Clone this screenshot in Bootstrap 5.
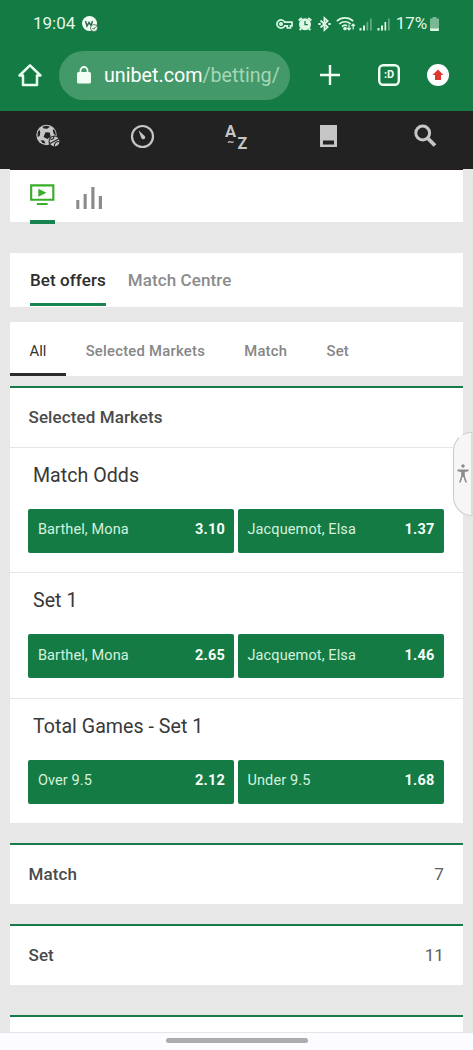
<!DOCTYPE html>
<html lang="en">
<head>
<meta charset="utf-8">
<meta name="viewport" content="width=device-width, initial-scale=1">
<title>Bet offers</title>
<link href="https://cdn.jsdelivr.net/npm/bootstrap@5.3.0/dist/css/bootstrap.min.css" rel="stylesheet">
<style>
  :root { --brand: #147b45; --page: #e7e7e7; }
  html, body { height: 1050px; overflow: hidden; }
  body { background: var(--page); font-family: Roboto, "Noto Sans", sans-serif; color: #333; line-height: 1; }
  svg { display: block; flex: none; overflow: visible; }
  .top-area { background: var(--brand); height: 111px; color: #fff; }
  .status { height: 47px; padding: 0 34px 0 33px; font-size: 17px; color: #e2f8e8; }
  .status svg { color: #dcf8e4; }
  .tool-row { height: 56px; padding: 0 24px 0 18px; }
  .omnibox { width: 231px; height: 49px; margin-left: 17px; padding-left: 18px; background: #44996a; font-size: 19.7px; overflow: hidden; }
  .omnibox .url { margin-left: 13px; padding-top: 2px; }
  .omnibox .path { color: #a5d6b6; }
  .site-nav { background: #222; height: 58px; color: #c6c6c6; }
  .site-nav .spot { display: flex; }
  .panel { margin: 0 10px; background: #fff; }
  .media-tabs { height: 53px; padding: 0 20px; gap: 21px; border-top: 1px solid #2b1d1d; }
  .media-tabs .on { height: 54px; border-bottom: 4px solid #17834f; }
  .page-tabs { height: 54px; margin-top: 31px; padding: 0 20px; gap: 22px; font-size: 17px; letter-spacing: .08px; font-weight: 500; color: #8b8b8b; }
  .page-tabs .tab { padding-top: 19px; height: 53px; border-bottom: 3px solid transparent; white-space: nowrap; }
  .page-tabs .on { color: #2d2d2d; border-color: #17834f; }
  .market-tabs { height: 54px; margin-top: 15px; font-size: 14.8px; font-weight: 500; color: #868686; }
  .market-tabs .tab { padding: 22px 19.6px 0; height: 54px; border-bottom: 3px solid transparent; white-space: nowrap; letter-spacing: .25px; }
  .market-tabs .on { color: #333; font-weight: 400; letter-spacing: 0; border-color: #2b2b2b; }
  .group-box { border-top: 2px solid #18794a; }
  .group-head { padding: 1px 19px 0 18.5px; height: 59px; font-size: 17px; font-weight: 500; color: #4a4a4a; letter-spacing: .1px; }
  .group-fold { padding-top: 0; }
  .group-head .count { font-size: 17.2px; font-weight: 400; color: #606060; letter-spacing: 0; padding-top: 1px; }
  .event { height: 125.5px; border-top: 1px solid #e6e6e6; padding: 0 19px 0 18.4px; }
  .event h2 { margin: 0; padding: 18px 0 0 4.6px; height: 61.4px; font-size: 19.6px; font-weight: 400; line-height: 20px; letter-spacing: .03px; color: #383838; }
  .odds { gap: 3.5px; }
  .btn-odd { height: 44px; flex: 1 1 0; border: 0; border-radius: 2px; padding: 0 9.5px 1px; background: var(--brand); color: #d5f2dd; font-size: 14.5px; letter-spacing: .12px; line-height: 1; }
  .btn-odd:hover { background: #0f6a3a; color: #fff; }
  .btn-odd b { color: #f4fff7; font-weight: 700; letter-spacing: .2px; }
  .a11y { position: absolute; right: -2px; top: 432px; width: 22px; height: 84px; background: #f6f6f6; border: 1.5px solid #c9c9c9; border-right: 4px solid #dcdcdc; border-radius: 19px 0 0 19px; color: #8c8c8c; }
  .gesture { position: absolute; left: 0; right: 0; bottom: 0; height: 18px; background: #fcfbff; border-top: 1px solid #e4e4e6; }
  .gesture span { width: 142px; height: 5px; background: #acacae; border-radius: 3px; margin-top: -2px; }
</style>
</head>
<body class="position-relative">

<header class="top-area">
  <div class="status d-flex align-items-center">
    <span>19:04</span>
    <svg style="margin-left:7px" width="16" height="16" viewBox="0 0 16 16"><circle cx="7.500" cy="7.500" r="7.500" fill="#f0fff4"/><path d="M3.500 5 5 10 7 6.500 9 9.500 10.500 5" fill="none" stroke="#35684c" stroke-width="1.500"/><circle cx="12" cy="12" r="3.500" fill="#f0fff4" stroke="#35684c" stroke-width=".8"/><path d="m10.500 12 1.200 1.200 2-2.400" fill="none" stroke="#35684c"/></svg>
    <div class="d-flex align-items-center ms-auto">
      <svg width="17" height="10" viewBox="0 0 17 10" fill="none" stroke="currentColor" stroke-width="1.700"><path d="M8.700 3.200A4.100 4.100 0 1 0 8.700 6.800H11.300V9H14.500V6.800H16V3.200Z"/><circle cx="5" cy="5" r="1.200"/></svg>
      <svg style="margin-left:5px" width="14" height="14" viewBox="0 0 14 14"><path d="M.7 3.600 3.800.9M13.300 3.600 10.200.9M3 11.500l-1.300 1.700M11 11.500l1.300 1.700" stroke="currentColor" stroke-width="2"/><circle cx="7" cy="7.300" r="6" fill="currentColor"/><path d="M7 4v3.700h2.800" fill="none" stroke="#147b45" stroke-width="1.300"/></svg>
      <svg style="margin-left:6px" width="13" height="14" viewBox="0 0 13 14" fill="none" stroke="currentColor" stroke-width="1.700"><path d="M2.500 3.500 9.700 10 6.400 13V1L9.700 4 2.500 10.500"/><path d="M.3 7h2.400M10.300 7h2.400" stroke-width="2"/></svg>
      <svg style="margin-left:5px" width="20" height="15" viewBox="0 0 20 15" fill="none" stroke="currentColor" stroke-width="1.700"><path d="M.8 5.200a12 12 0 0 1 16.400 0M3.300 8a8.300 8.300 0 0 1 11.400 0M6 10.600a4.500 4.500 0 0 1 5-.9"/><circle cx="9" cy="12.500" r="1" fill="currentColor"/><path d="M13 8.500v5M11.200 12l1.800 1.800 1.800-1.800M17.200 13.500v-5M15.500 10l1.700-1.800 1.700 1.800" stroke-width="1.200"/></svg>
      <svg style="margin-left:3px" width="13" height="14" viewBox="0 0 13 14" fill="currentColor"><path d="M.5 11h2v2.500h-2zM4 8.500h2v5H4z"/><path d="M7.500 5h1.700v8.500H7.500zM11 1.500h1.700v12H11z" opacity=".4"/></svg>
      <svg style="margin-left:5px" width="13" height="14" viewBox="0 0 13 14" fill="currentColor"><path d="M.5 11h2v2.500h-2zM4 8.500h2v5H4zM7.500 5h1.700v8.500H7.500z"/><path d="M11 1.500h1.700v12H11z" opacity=".4"/></svg>
      <span style="margin-left:6px;font-size:17px;letter-spacing:-.1px">17%</span>
      <svg style="margin-left:3px" width="9" height="14" viewBox="0 0 9 14" fill="currentColor"><path d="M2.500 0h4v1.500H9V12H0V1.500h2.500z" opacity=".5"/><path d="M0 11.500h9V13q0 1-1 1H1q-1 0-1-1z"/></svg>
    </div>
  </div>

  <div class="tool-row d-flex align-items-center">
    <svg width="24" height="24" viewBox="0 0 24 24" fill="none" stroke="#e9fff0" stroke-width="2.500" stroke-linejoin="round"><path d="M1.500 12.500 12 2.300 22.500 12.500H19V22H5V12.500Z"/></svg>
    <div class="omnibox rounded-pill d-flex align-items-center">
      <svg width="14" height="18" viewBox="0 0 14 18"><path d="M3.500 8V4.500a3.500 3.500 0 0 1 7 0V8" fill="none" stroke="#f1fff5" stroke-width="1.800"/><rect y="6" width="14" height="11.500" rx="1.500" fill="#f1fff5"/></svg>
      <span class="url text-nowrap">unibet.com<span class="path">/betting/</span></span>
    </div>
    <svg style="margin-left:30px" width="20" height="20" viewBox="0 0 20 20"><path d="M10 0v20M0 10h20" stroke="#effff4" stroke-width="2.400"/></svg>
    <div class="d-flex ms-auto align-items-center">
      <svg width="22" height="22" viewBox="0 0 22 22"><rect x="1.200" y="1.200" width="19.600" height="19.600" rx="4" fill="none" stroke="#f1fff5" stroke-width="2.400"/><text x="11" y="14.300" text-anchor="middle" font-family="Roboto" font-weight="700" font-size="11" fill="#f1fff5">:D</text></svg>
      <svg style="margin-left:27px" width="22" height="22" viewBox="0 0 22 22"><circle cx="11" cy="11" r="11" fill="#fff"/><path d="m11 5.500 5.500 5.500h-2.500v5H8v-5H5.500z" fill="#db382e"/></svg>
    </div>
  </div>
</header>

<nav class="site-nav d-flex align-items-start" style="padding:13px 36px 0">
  <a class="spot text-reset" href="#" aria-label="Sports"><svg width="25" height="25" viewBox="0 0 25 25"><circle cx="10.500" cy="11" r="10.200" fill="currentColor"/><path d="m9.500 8.200 4.200.2 1 4-3.200 2.600-4-2zM6.500 2.700l4-.9 3.500 1-2.800 2-3.700-.3zM17.500 5l1.800 2.500.7 4-2.200-1.500-1-3zM1.700 8.500l1.600-3 1 3-.7 3.500-2 1zM4.500 16.200l3.600.4 1.400 3-3-.6z" fill="#222"/><circle cx="18.500" cy="17.500" r="6" fill="#222"/><circle cx="18.500" cy="17.500" r="4.900" fill="currentColor"/><path d="M14.500 15.500q4 .2 3.300-3.500M23.300 17.500q-5 0-5 5M14 19.500l9.500-5" fill="none" stroke="#222" stroke-width="1.100"/></svg></a>
  <a class="spot text-reset" style="margin-left:70px" href="#" aria-label="In-play"><svg width="24" height="26" viewBox="0 0 24 26"><circle cx="11.500" cy="12.500" r="10.500" fill="none" stroke="currentColor" stroke-width="2.200"/><path d="m7.500 6.300 5.900 5.400a2 2 0 1 1-3.200 2z" fill="currentColor"/></svg></a>
  <a class="spot text-reset" style="margin-left:69px" href="#" aria-label="A to Z"><svg width="24" height="27" viewBox="0 0 24 27" fill="currentColor" font-family="Roboto" font-weight="700"><text x="1" y="13.300" font-size="16.500">A</text><text x="13.500" y="25" font-size="16">Z</text><path d="M4 18.700q1.500-1.700 3-.7t2.500-.5" fill="none" stroke="currentColor" stroke-width="1.200"/></svg></a>
  <a class="spot text-reset" style="margin-left:72px" href="#" aria-label="Bet slip"><svg width="17" height="25" viewBox="0 0 17 25"><path d="M0 1h17v22H0z" fill="currentColor"/><path d="M3 16.500h11v4H3z" fill="#222"/></svg></a>
  <a class="spot text-reset" style="margin-left:77px" href="#" aria-label="Search"><svg width="24" height="24" viewBox="0 0 24 24" fill="none" stroke="currentColor"><circle cx="8.700" cy="9" r="6.900" stroke-width="3"/><path d="m13.500 14 7.500 7.500" stroke-width="3.800"/></svg></a>
</nav>

<section class="panel media-tabs d-flex">
  <div class="on"><svg style="margin-top:14px" width="24.500" height="22" viewBox="0 0 25 22"><path d="M1.200 1.200h22.600v14.600H1.200z" fill="none" stroke="#38ad2c" stroke-width="2.200"/><path d="m8.500 4.700 8.300 4-8.300 4z" fill="#38ad2c"/><path d="M7 19.200h11v2H7z" fill="#38ad2c"/></svg></div>
  <svg style="margin-top:17px" width="26" height="22" viewBox="0 0 26 22" fill="#8b8b8b"><path d="M.3 13h3v9h-3zM7.600 7h3.100v15H7.600zM15.300 0h3.200v22h-3.200zM22.800 9H26v13h-3.200z"/></svg>
</section>

<nav class="panel page-tabs d-flex">
  <div class="tab on">Bet offers</div>
  <div class="tab">Match Centre</div>
</nav>

<nav class="panel market-tabs d-flex">
  <div class="tab on">All</div>
  <div class="tab">Selected Markets</div>
  <div class="tab">Match</div>
  <div class="tab">Set</div>
</nav>

<section class="panel group-box" style="margin-top:10px">
  <div class="group-head d-flex align-items-center" style="height:58.500px">Selected Markets</div>
  <div class="event">
    <h2>Match Odds</h2>
    <div class="odds d-flex">
      <button class="btn btn-odd d-flex align-items-center justify-content-between"><span>Barthel, Mona</span><b>3.10</b></button>
      <button class="btn btn-odd d-flex align-items-center justify-content-between"><span>Jacquemot, Elsa</span><b>1.37</b></button>
    </div>
  </div>
  <div class="event">
    <h2>Set 1</h2>
    <div class="odds d-flex">
      <button class="btn btn-odd d-flex align-items-center justify-content-between"><span>Barthel, Mona</span><b>2.65</b></button>
      <button class="btn btn-odd d-flex align-items-center justify-content-between"><span>Jacquemot, Elsa</span><b>1.46</b></button>
    </div>
  </div>
  <div class="event">
    <h2>Total Games - Set 1</h2>
    <div class="odds d-flex">
      <button class="btn btn-odd d-flex align-items-center justify-content-between"><span>Over 9.5</span><b>2.12</b></button>
      <button class="btn btn-odd d-flex align-items-center justify-content-between"><span>Under 9.5</span><b>1.68</b></button>
    </div>
  </div>
</section>

<section class="panel group-box" style="margin-top:20px">
  <div class="group-head group-fold d-flex align-items-center justify-content-between"><span>Match</span><span class="count">7</span></div>
</section>
<section class="panel group-box" style="margin-top:20px">
  <div class="group-head group-fold d-flex align-items-center justify-content-between"><span>Set</span><span class="count">11</span></div>
</section>
<section class="panel group-box" style="margin-top:30px;height:18px"></section>

<div class="a11y d-flex align-items-center" aria-label="Accessibility"><svg style="margin-left:3px" width="12" height="20" viewBox="0 0 12 20"><circle cx="6" cy="2" r="1.700" fill="currentColor"/><path d="M.5 5.500h11v1.800l-3.700.6v4L10 18.500H8.300L6.500 13h-1l-1.800 5.500H2L4.200 12V7.900L.5 7.300z" fill="currentColor"/></svg></div>
<footer class="gesture d-flex align-items-center justify-content-center"><span></span></footer>

<script src="https://cdn.jsdelivr.net/npm/bootstrap@5.3.0/dist/js/bootstrap.bundle.min.js"></script>
</body>
</html>
